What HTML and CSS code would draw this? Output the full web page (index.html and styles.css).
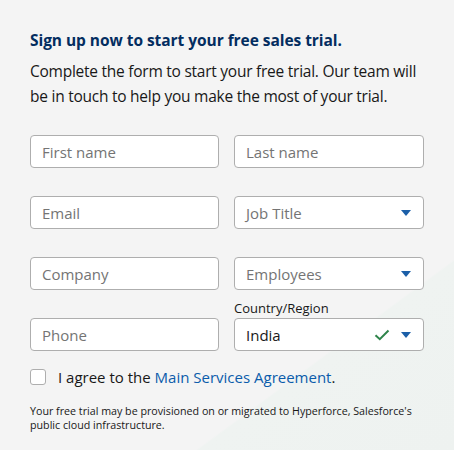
FILE: index.html
```html
<!DOCTYPE html>
<html lang="en">
<head>
<meta charset="utf-8">
<link rel="stylesheet" href="styles.css">
</head>
<body>
<div class="page">
  <form class="form">
    <h1 class="title">Sign up now to start your free sales trial.</h1>
    <p class="intro">Complete the form to start your free trial. Our team will be in touch to help you make the most of your trial.</p>
    <div class="grid">
      <div class="field"><div class="input placeholder">First name</div></div>
      <div class="field"><div class="input placeholder">Last name</div></div>
      <div class="field"><div class="input placeholder">Email</div></div>
      <div class="field"><div class="input select placeholder">Job Title<span class="caret"></span></div></div>
      <div class="field"><div class="input placeholder">Company</div></div>
      <div class="field"><div class="input select placeholder">Employees<span class="caret"></span></div></div>
      <div class="field"><div class="input placeholder">Phone</div></div>
      <div class="field labeled">
        <label class="label">Country/Region</label>
        <div class="input select value">India
          <svg class="check" width="16" height="12" viewBox="0 0 16 12"><path d="M1.5 6.2 L5.8 10.2 L14.5 1.5" fill="none" stroke="#2e844a" stroke-width="2"/></svg>
          <span class="caret"></span>
        </div>
      </div>
    </div>
    <div class="agree">
      <span class="box"></span>
      <span class="agree-text">I agree to the <a class="link">Main Services Agreement</a>.</span>
    </div>
    <p class="fine">Your free trial may be provisioned on or migrated to Hyperforce, Salesforce's public cloud infrastructure.</p>
  </form>
</div>
</body>
</html>
```
FILE: styles.css
```css
html, body {
  margin: 0;
  padding: 0;
}
body {
  width: 454px;
  height: 450px;
  overflow: hidden;
  background: #f4f4f4;
  font-family: "Open Sans", "Noto Sans", sans-serif;
}
.page {
  height: 450px;
  background: linear-gradient(143.6deg, #f4f4f4 0%, #f4f4f4 75.7%, #eff3f1 76%, #eef2f0 100%);
}
.form {
  padding: 29px 30px 0 30px;
}
.title {
  margin: 0;
  font-size: 15.5px;
  font-weight: 700;
  color: #032d60;
  line-height: 22px;
  letter-spacing: -0.05px;
}
.intro {
  margin: 8px 0 0 0;
  font-size: 15.5px;
  line-height: 25px;
  color: #181818;
  letter-spacing: -0.25px;
}
.grid {
  margin-top: 26px;
  display: grid;
  grid-template-columns: 189px 190px;
  column-gap: 15px;
  row-gap: 28px;
  align-items: end;
}
.field {
  display: flex;
  flex-direction: column;
}
.labeled {
  margin-top: -50px;
}
.label {
  font-size: 13px;
  color: #181818;
  line-height: 18px;
  margin-bottom: 1px;
}
.input {
  box-sizing: border-box;
  height: 33px;
  border: 1px solid #aeaeae;
  border-radius: 4px;
  background: #fff;
  display: flex;
  align-items: center;
  padding: 0 11px;
  font-size: 15px;
}
.placeholder {
  color: #747474;
}
.value {
  color: #181818;
}
.select {
  position: relative;
}
.caret {
  position: absolute;
  right: 12px;
  top: 13px;
  width: 0;
  height: 0;
  border-left: 5px solid transparent;
  border-right: 5px solid transparent;
  border-top: 6px solid #1b5fa8;
}
.check {
  position: absolute;
  right: 33px;
  top: 10px;
}
.agree {
  margin-top: 16px;
  display: flex;
  align-items: center;
  gap: 12px;
}
.box {
  box-sizing: border-box;
  width: 16px;
  height: 16px;
  border: 1px solid #aeaeae;
  border-radius: 3px;
  background: #fff;
}
.agree-text {
  font-size: 15px;
  color: #181818;
}
.link {
  color: #0b5cab;
  text-decoration: none;
}
.fine {
  margin: 17px 0 0 0;
  font-size: 10.7px;
  line-height: 14px;
  color: #181818;
}
```
